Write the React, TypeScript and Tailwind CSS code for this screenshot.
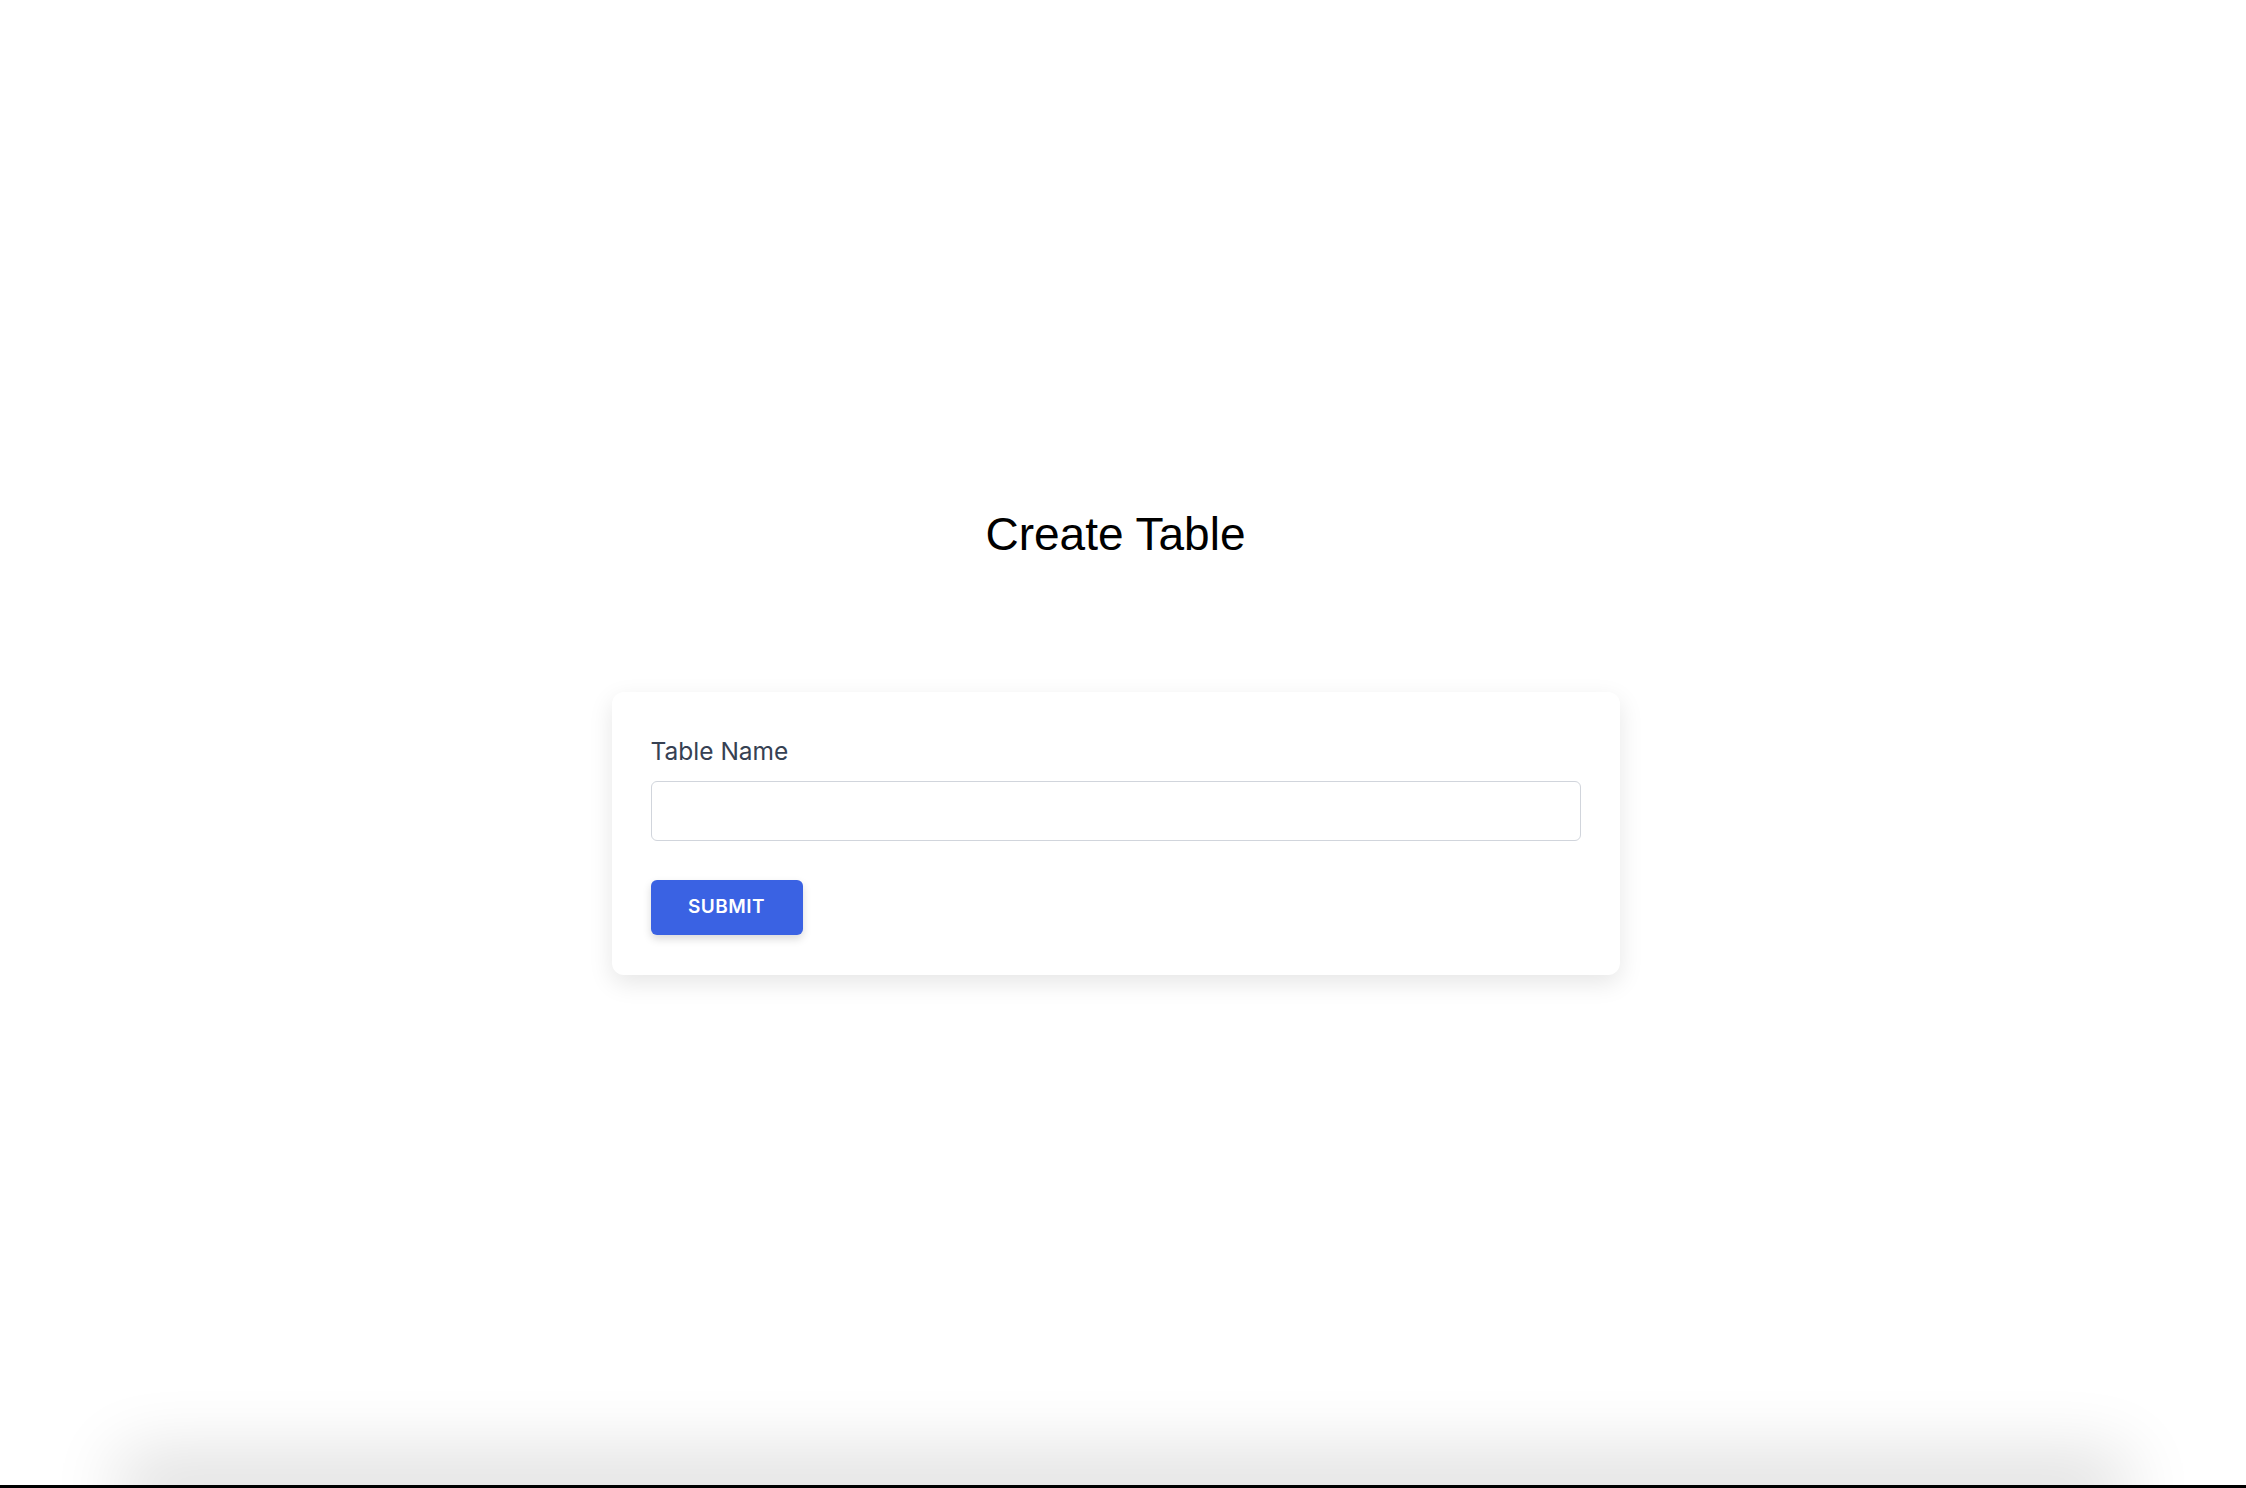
export default function App() {
  return (
    <div className="relative h-[1488px] w-full overflow-hidden bg-white">
      <div className="flex w-[calc(100%-15px)] flex-col items-center">
        <h1 className="mt-[506px] text-[46px] leading-[56px] text-black [font-family:'Liberation_Sans',Arial,sans-serif]">
          Create Table
        </h1>
        <form
          className="mt-[130px] w-[1008px] rounded-xl bg-white px-[39px] pt-[43px] pb-[40px] shadow-[0_8px_24px_rgba(0,0,0,0.1)] [font-family:Inter,'Noto_Sans',sans-serif]"
          onSubmit={(e) => e.preventDefault()}
        >
          <label className="block text-[24.5px] leading-[32px] text-gray-700">Table Name</label>
          <input
            type="text"
            className="mt-[14px] block h-[60px] w-full rounded-md border border-gray-300 bg-white px-4 text-[22px] outline-none"
          />
          <button
            type="submit"
            className="mt-[39px] h-[55px] w-[152px] rounded-md bg-[#3a62e3] text-[19px] font-semibold tracking-wide text-white shadow-[0_4px_8px_rgba(0,0,0,0.15)]"
          >
            SUBMIT
          </button>
        </form>
      </div>
      <div className="absolute bottom-0 left-0 right-0 h-[3px] bg-black">
        <div className="mx-[150px] h-[3px] shadow-[0_0_70px_30px_rgba(0,0,0,0.14)]" />
      </div>
    </div>
  );
}
